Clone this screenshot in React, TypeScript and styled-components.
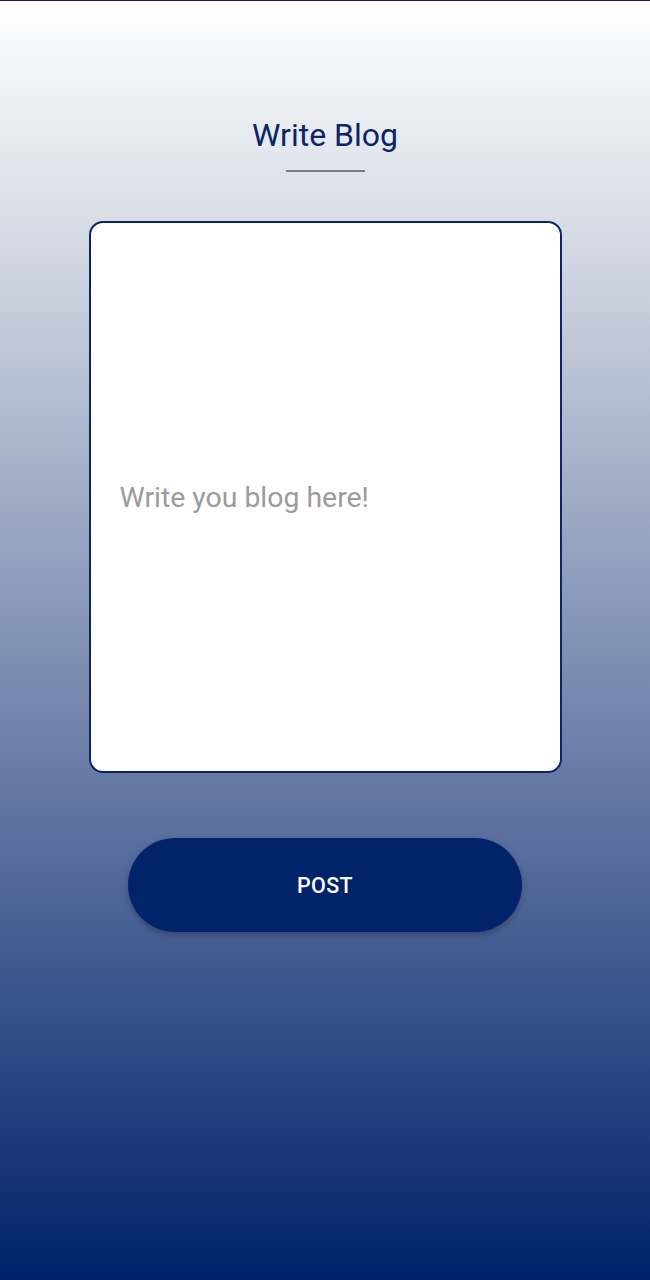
import React from "react";
import styled, { createGlobalStyle } from "styled-components";

const Global = createGlobalStyle`
  html, body { margin: 0; padding: 0; }
  body { font-family: Roboto, "Noto Sans", sans-serif; }
`;

const Screen = styled.div`
  box-sizing: border-box;
  height: 1280px;
  display: flex;
  flex-direction: column;
  align-items: center;
  border-top: 1px solid #2a0e7a;
  background: linear-gradient(to bottom, #ffffff 0%, #d6dbe5 18%, #00216a 100%);
`;

const Title = styled.h1`
  margin: 115px 0 0;
  font-size: 32px;
  line-height: 38px;
  font-weight: 400;
  color: #0b2567;
`;

const Underline = styled.div`
  width: 79px;
  height: 2px;
  margin-top: 16px;
  background: #7a7d86;
`;

const Card = styled.div`
  box-sizing: border-box;
  margin-top: 49px;
  width: 473px;
  height: 552px;
  background: #ffffff;
  border: 2px solid #0d2566;
  border-radius: 14px;
  display: flex;
  align-items: center;
  padding: 0 29px;
`;

const Placeholder = styled.span`
  font-size: 28.4px;
  color: #9b9b9b;
`;

const PostButton = styled.button`
  margin-top: 65px;
  width: 394px;
  height: 94px;
  border: none;
  border-radius: 47px;
  background: #00236a;
  color: #ffffff;
  font-family: Roboto, sans-serif;
  font-weight: 500;
  font-size: 21.5px;
  letter-spacing: 0.3px;
  box-shadow: 0 3px 6px rgba(0, 0, 0, 0.25);
`;

export default function App() {
  return (
    <>
      <Global />
      <Screen>
        <Title>Write Blog</Title>
        <Underline />
        <Card>
          <Placeholder>Write you blog here!</Placeholder>
        </Card>
        <PostButton>POST</PostButton>
      </Screen>
    </>
  );
}
